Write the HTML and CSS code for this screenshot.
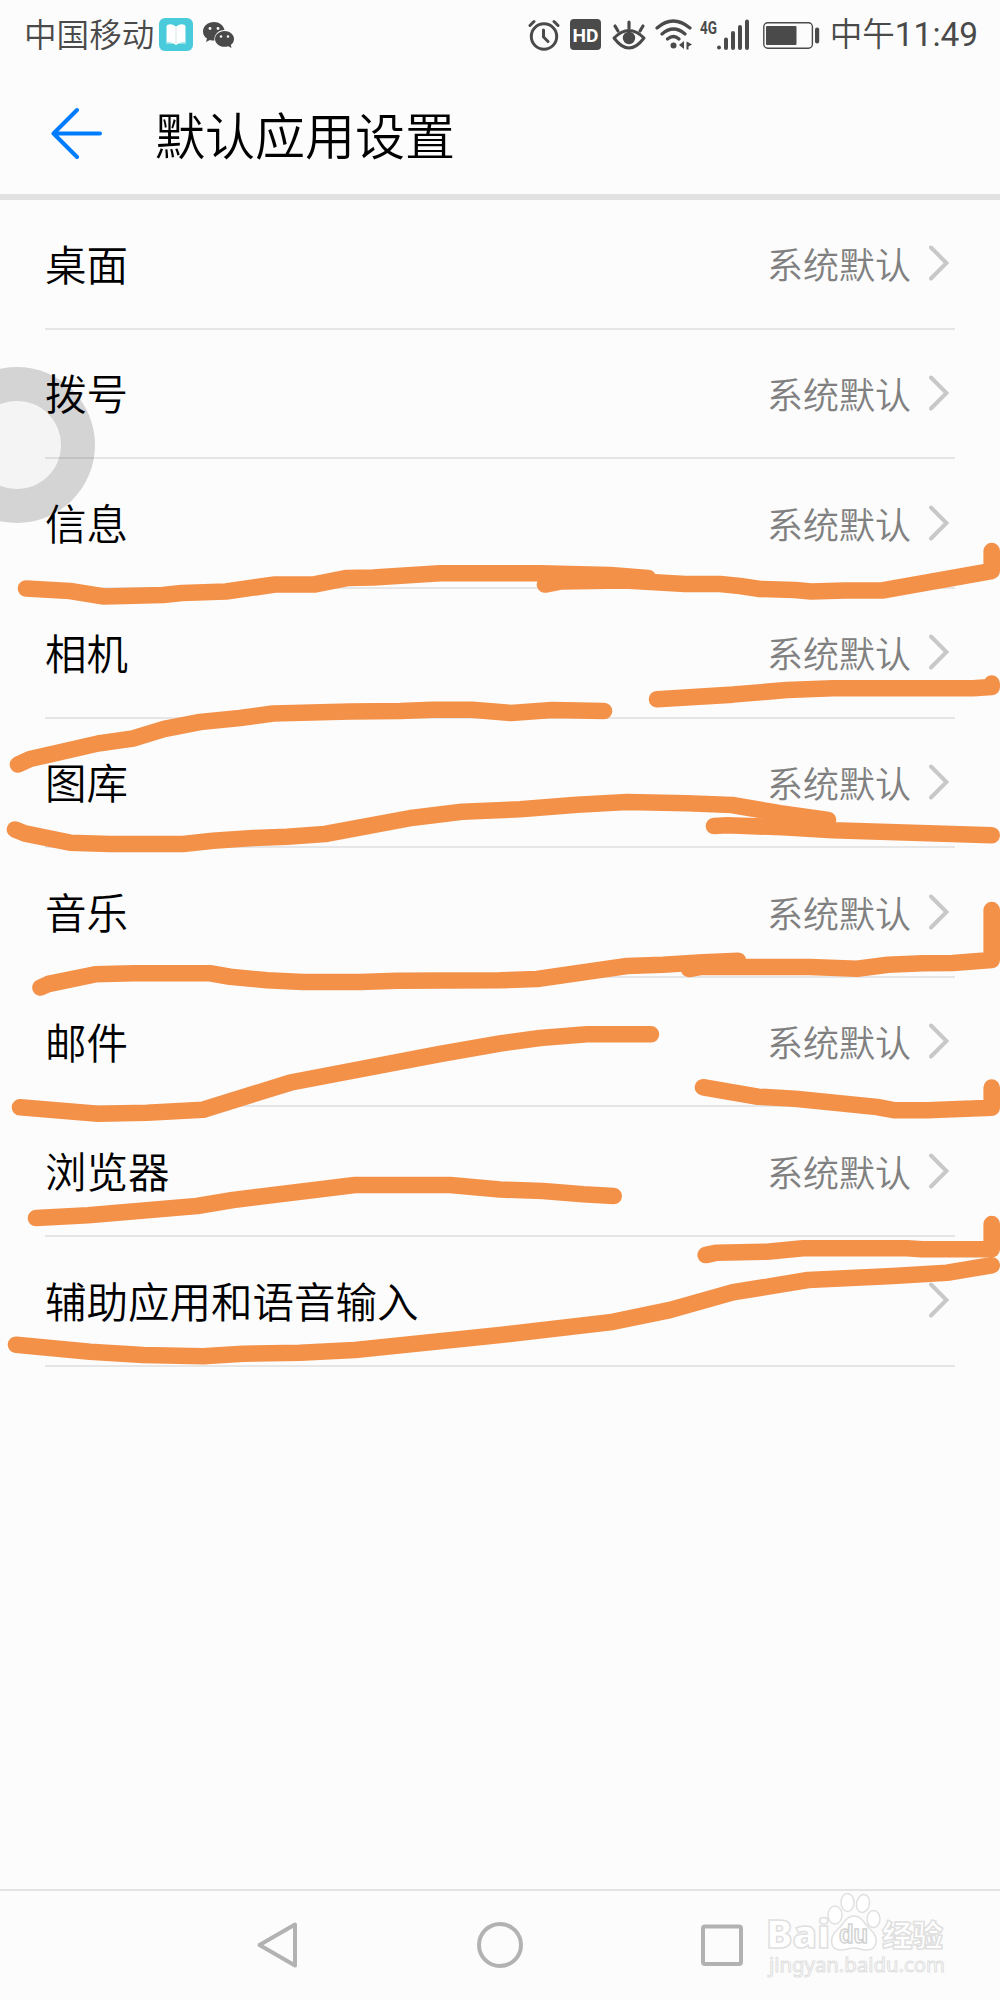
FILE: index.html
```html
<!DOCTYPE html>
<html lang="zh-CN">

<head>
    <meta charset="UTF-8">
    <meta name="viewport" content="width=device-width, initial-scale=1.0">
    <title>默认应用设置</title>
    <link rel="stylesheet" href="styles.css">
</head>

<body>
    <div class="screen">
        <div class="statusbar">
            <span class="carrier">中国移动</span>
            <svg class="icon-book" width="34" height="34" viewBox="0 0 34 34">
                <rect width="34" height="33" rx="6" fill="#4acbdb"/>
                <path d="M7 8h20v18h-8l-2 1-2-1H7z" fill="#9be3ec"/>
                <path d="M8 7q6-2 9 2 3-4 9-2v17q-6 0-9 3-3-3-9-3z" fill="#fff"/>
                <path d="M17 9v16" stroke="#d5e6e9" stroke-width="1"/>
            </svg>
            <svg class="icon-wechat" width="32" height="28" viewBox="0 0 32 28">
                <path d="M11 1C5 1 0 5 0 10.500c0 3 1.500 5.500 4 7L3 21l4-2q2 .7 4.500.6A10 9 0 0 1 21.500 9C20.500 4 16 1 11 1z" fill="#4a4a4a"/>
                <path d="M21.500 10c5 0 9.500 3.500 9.500 8 0 2.500-1.300 4.500-3.200 6l.7 3-3.300-1.700q-1.700.5-3.700.5c-5.300 0-9.500-3.500-9.500-7.800s4.200-8 9.500-8z" fill="#4a4a4a"/>
                <g fill="#fcfcfc"><circle cx="7" cy="7.500" r="1.400"/><circle cx="15" cy="7.500" r="1.400"/><circle cx="18" cy="15.500" r="1.200"/><circle cx="25" cy="15.500" r="1.200"/></g>
            </svg>
            <div class="indicators">
                <svg width="32" height="32" viewBox="0 0 32 32" fill="none" stroke="#4a4a4a" stroke-linecap="round">
                    <circle cx="16" cy="17.500" r="12.700" stroke-width="3"/>
                    <path d="M15.500 11v7l4.500 4.500" stroke-width="3"/>
                    <path d="M2 6.500l4-4M30 6.500l-4-4" stroke-width="3"/>
                </svg>
                <svg class="icon-hd" width="31" height="31" viewBox="0 0 31 31">
                    <rect width="31" height="31" rx="4" fill="#4a4a4a"/>
                    <text x="15.500" y="22.500" text-anchor="middle" textLength="26" lengthAdjust="spacingAndGlyphs" class="hd-text">HD</text>
                </svg>
                <svg class="icon-eye" width="34" height="30" viewBox="0 0 34 30" fill="none" stroke="#4a4a4a" stroke-linecap="round">
                    <path d="M2 18Q17 3 32 18Q17 38 2 18z" stroke-width="3" stroke-linejoin="round"/>
                    <circle cx="17" cy="18" r="6.200" fill="#4a4a4a" stroke="none"/>
                    <path d="M17 2v6M3 6l3 5M31 6l-3 5" stroke-width="3.200"/>
                </svg>
                <svg class="icon-wifi" width="38" height="31" viewBox="0 0 38 31" fill="none" stroke="#4a4a4a" stroke-linecap="round">
                    <path d="M2 9Q18-5 35 9M7 15Q18.500 5 30 15M12.500 20Q18.500 15 24 20" stroke-width="3.200"/>
                    <circle cx="18.500" cy="26.500" r="3" fill="#4a4a4a" stroke="none"/>
                    <path d="M29 22v8l-5-4zM31.500 22.500v8h2v-3l3.500-2-3.500-2z" fill="#4a4a4a" stroke="none"/>
                </svg>
                <svg class="icon-signal" width="49" height="32" viewBox="0 0 49 32">
                    <text x="0" y="14.500" textLength="17" lengthAdjust="spacingAndGlyphs" class="net-text">4G</text>
                    <path d="M19 28.500v.1M26 20.500v8.500M33 14v15M40 8v21M47 2.500v26.500" fill="none" stroke="#4a4a4a" stroke-width="4" stroke-linecap="round"/>
                </svg>
                <svg class="icon-battery" width="57" height="27" viewBox="0 0 57 27">
                    <rect x=".8" y=".8" width="48.600" height="25.400" rx="4" fill="none" stroke="#4a4a4a" stroke-width="1.400"/>
                    <rect x="3" y="4" width="30.500" height="19" rx="1" fill="#4a4a4a"/>
                    <rect x="52" y="5.500" width="4.200" height="16" rx="2" fill="#4a4a4a"/>
                </svg>
                <span class="clock">中午<span class="digits">11:49</span></span>
            </div>
        </div>

        <div class="header">
            <svg class="back" width="52" height="52" viewBox="0 0 52 52" fill="none" stroke="#007dff" stroke-width="4" stroke-linecap="round" stroke-linejoin="round">
                <path d="M27 3L3.500 26.500L27 50M3.500 26.500H50"/>
            </svg>
            <h1>默认应用设置</h1>
        </div>

        <ul class="list">
            <li><span class="name">桌面</span><span class="value">系统默认</span><svg class="chevron" viewBox="0 0 20 36"><path d="M2 2.500L17.500 18L2 33.500"/></svg></li>
            <li><span class="name">拨号</span><span class="value">系统默认</span><svg class="chevron" viewBox="0 0 20 36"><path d="M2 2.500L17.500 18L2 33.500"/></svg></li>
            <li><span class="name">信息</span><span class="value">系统默认</span><svg class="chevron" viewBox="0 0 20 36"><path d="M2 2.500L17.500 18L2 33.500"/></svg></li>
            <li><span class="name">相机</span><span class="value">系统默认</span><svg class="chevron" viewBox="0 0 20 36"><path d="M2 2.500L17.500 18L2 33.500"/></svg></li>
            <li><span class="name">图库</span><span class="value">系统默认</span><svg class="chevron" viewBox="0 0 20 36"><path d="M2 2.500L17.500 18L2 33.500"/></svg></li>
            <li><span class="name">音乐</span><span class="value">系统默认</span><svg class="chevron" viewBox="0 0 20 36"><path d="M2 2.500L17.500 18L2 33.500"/></svg></li>
            <li><span class="name">邮件</span><span class="value">系统默认</span><svg class="chevron" viewBox="0 0 20 36"><path d="M2 2.500L17.500 18L2 33.500"/></svg></li>
            <li><span class="name">浏览器</span><span class="value">系统默认</span><svg class="chevron" viewBox="0 0 20 36"><path d="M2 2.500L17.500 18L2 33.500"/></svg></li>
            <li><span class="name">辅助应用和语音输入</span><svg class="chevron" viewBox="0 0 20 36"><path d="M2 2.500L17.500 18L2 33.500"/></svg></li>
        </ul>

        <div class="navbar">
            <svg width="48" height="48" viewBox="0 0 48 48"><path d="M41 3.500V44.500L5.500 24z"/></svg>
            <svg width="48" height="48" viewBox="0 0 48 48"><circle cx="24" cy="24" r="21"/></svg>
            <svg width="48" height="48" viewBox="0 0 48 48"><rect x="5" y="5.500" width="38" height="37.500" rx="2"/></svg>
        </div>

        <!-- floating touch button, half off screen -->
        <div class="float-button"></div>

        <!-- marker strokes -->
        <svg class="marker" width="1000" height="2000" viewBox="0 0 1000 2000">
            <path d="M26 588.500L70 591L104 596.500L163 595L182 593L226 591.500L275 584.500L314 584.500L347 578L373 577.500L440 573.300L540 573.300L610 575L648 578"/>
            <path d="M545 584.500L560 581.500L625 580.500L685 584L720 584L740 586L760 589L795 590L811 591.500L845 590.500L882 590.500L991.700 571V551"/>
            <path d="M18 764.500L30 759L98 743.500L133 738.500L164 729L200 722L240 718L273 713.500L350 711.500L400 711L433 709.700L472 709.700L511 713L552 710L604 711"/>
            <path d="M657 699.300L733 694.600L787 690L833 688.300L973 688.300L991.700 687V683.500"/>
            <path d="M15 829.500L25 833.500L70 842.700L110 844L183 844L213 840.700L253 838L287 836.700L325 834L413 817.700L462 811.700L520 809.300L577 804.700L627 802L687 803.300L732 805L780 813.300L828 820"/>
            <path d="M714 826L727 825.300L783 827.300L833 830.300L991.700 835.300"/>
            <path d="M40.500 987.500L48.300 984L95 974.300L133 973.300L210 973.300L230 976.700L267 980.300L303 982L360 982L397 980.700L500 980.300L537 979L627 966L663 964.700L703 962.300L738 960.700"/>
            <path d="M689 969L700 967L810 967L857 968.700L888 964.700L923 963.300L953 963L991.700 960V910"/>
            <path d="M20 1107.300L98 1113.700L147 1112.700L203 1109.700L290 1082.700L440 1054L500 1043.500L540 1038L587 1034.300L651 1034.300"/>
            <path d="M703 1087.300L758 1096.700L795 1098.700L877 1107L895 1110.300L927 1110.300L991.700 1107.700V1087.500"/>
            <path d="M36 1218L88 1215.300L197 1206L233 1200L355 1185L450 1185L500 1189.500L543 1191L583 1194.300L613.700 1196"/>
            <path d="M705.700 1255L717 1252.700L767 1251.700L803 1248.300L907 1248.300L922 1249.300L991.700 1249.300V1224"/>
            <path d="M16 1344.700L90 1351.700L143 1355L203 1356.300L243 1353.700L300 1352.700L355 1350L500 1335L610 1322.300L670 1310L733 1292.300L808 1280L893 1276L947 1272.700L991.700 1265.300"/>
        </svg>

        <svg class="watermark" width="190" height="100" viewBox="0 0 190 100">
            <g class="wm-shape">
                <ellipse cx="75" cy="26" rx="7" ry="9"/>
                <ellipse cx="87.500" cy="13.500" rx="6.500" ry="9"/>
                <ellipse cx="103" cy="14.500" rx="6.500" ry="9" transform="rotate(12 103 14.500)"/>
                <ellipse cx="113.500" cy="30" rx="6.500" ry="8.500"/>
                <path d="M94 27c8 0 10 8 16 13 10 9 7 21-3 21-6 0-8-2-13-2s-8 2-13 2c-11 0-13-12-3-21 6-5 8-13 16-13z"/>
            </g>
            <text x="6" y="59" class="wm-bold" textLength="64" lengthAdjust="spacingAndGlyphs">Bai</text>
            <text x="79" y="54" class="wm-du" textLength="29" lengthAdjust="spacingAndGlyphs">du</text>
            <text x="122" y="57" class="wm-cjk" textLength="61" lengthAdjust="spacingAndGlyphs">经验</text>
            <text x="9" y="83" class="wm-url" textLength="176" lengthAdjust="spacingAndGlyphs">jingyan.baidu.com</text>
        </svg>
    </div>
</body>

</html>
```

FILE: styles.css
```css
body {
    margin: 0;
    background-color: #fcfcfc;
    font-family: "Noto Sans CJK SC", sans-serif;
    font-weight: 350;
    color: #000;
}

.screen {
    position: relative;
    width: 1000px;
    height: 2000px;
    overflow: hidden;
    display: flex;
    flex-direction: column;
}

/* status bar */
.statusbar {
    display: flex;
    align-items: center;
    height: 69px;
    padding: 0 22px 0 24px;
    color: #4a4a4a;
    font-size: 32.6px;
    line-height: 66px;
}

.carrier,
.clock {
    margin-top: -3px;
}

.icon-book {
    margin-left: 5px;
}

.icon-wechat {
    margin-left: 10px;
}

.indicators {
    display: flex;
    align-items: center;
    margin-left: auto;
}

.icon-hd {
    margin-left: 10px;
}

.icon-eye {
    margin-left: 11px;
}

.icon-wifi {
    margin-left: 9px;
}

.icon-signal {
    margin-left: 7px;
}

.icon-battery {
    margin: 2px 0 0 14px;
}

.clock {
    margin-left: 10px;
}

.digits {
    font-family: Roboto, sans-serif;
    font-size: 33.4px;
    font-weight: 400;
}

.hd-text {
    font: bold 19px Roboto, sans-serif;
    fill: #fff;
}

.net-text {
    font: bold 18px Roboto, sans-serif;
    fill: #4a4a4a;
}

/* title bar */
.header {
    display: flex;
    align-items: center;
    height: 125px;
    padding-left: 50px;
    border-bottom: 6px solid #e1e1e1;
}

.back {
    margin-top: 3px;
}

.header h1 {
    margin: 3px 0 0 53px;
    font-size: 50px;
    font-weight: 350;
    line-height: 70px;
}

/* settings rows */
.list {
    flex: 1;
    list-style: none;
    margin: 0;
    padding: 0 45px;
}

.list li {
    box-sizing: border-box;
    display: flex;
    align-items: center;
    height: 129.65px;
    padding-right: 6px;
    border-bottom: 2px solid #e6e6e6;
}

.name {
    flex: 1;
    margin-top: -2px;
    font-size: 41.5px;
}

.value {
    margin-top: -1px;
    font-size: 36px;
    color: #808080;
}

.chevron {
    width: 20px;
    height: 36px;
    margin: -1px 0 0 18px;
    fill: none;
    stroke: #c8c8c8;
    stroke-width: 4;
    stroke-linecap: round;
}

/* bottom keys */
.navbar {
    display: flex;
    justify-content: center;
    gap: 174px;
    height: 79px;
    padding-top: 30px;
    border-top: 2px solid #e3e3e3;
}

.navbar svg {
    fill: none;
    stroke: #b2b2b2;
    stroke-width: 4;
    stroke-linejoin: round;
}

.float-button {
    position: absolute;
    left: -61px;
    top: 367px;
    box-sizing: border-box;
    width: 156px;
    height: 156px;
    border: 34px solid rgba(0, 0, 0, 0.155);
    border-radius: 50%;
    background-color: rgba(0, 0, 0, 0.03);
    background-clip: padding-box;
}

.marker {
    position: absolute;
    left: 0;
    top: 0;
    fill: none;
    stroke: #f39149;
    stroke-width: 16.6;
    stroke-linecap: round;
    stroke-linejoin: round;
}

.watermark {
    position: absolute;
    left: 760px;
    top: 1889px;
    fill: #fff;
    stroke: #e0e0e0;
    stroke-width: 1.5;
}

.wm-bold {
    font: 800 38px "Open Sans", sans-serif;
}

.wm-du {
    font: bold 25px "Liberation Sans", sans-serif;
    fill: #fcfcfc;
    stroke: #d2d2d2;
}

.wm-cjk {
    font: 900 30px "Noto Sans CJK SC", sans-serif;
}

.wm-url {
    font: 20px "Noto Sans", sans-serif;
    stroke-width: 1;
}
```
